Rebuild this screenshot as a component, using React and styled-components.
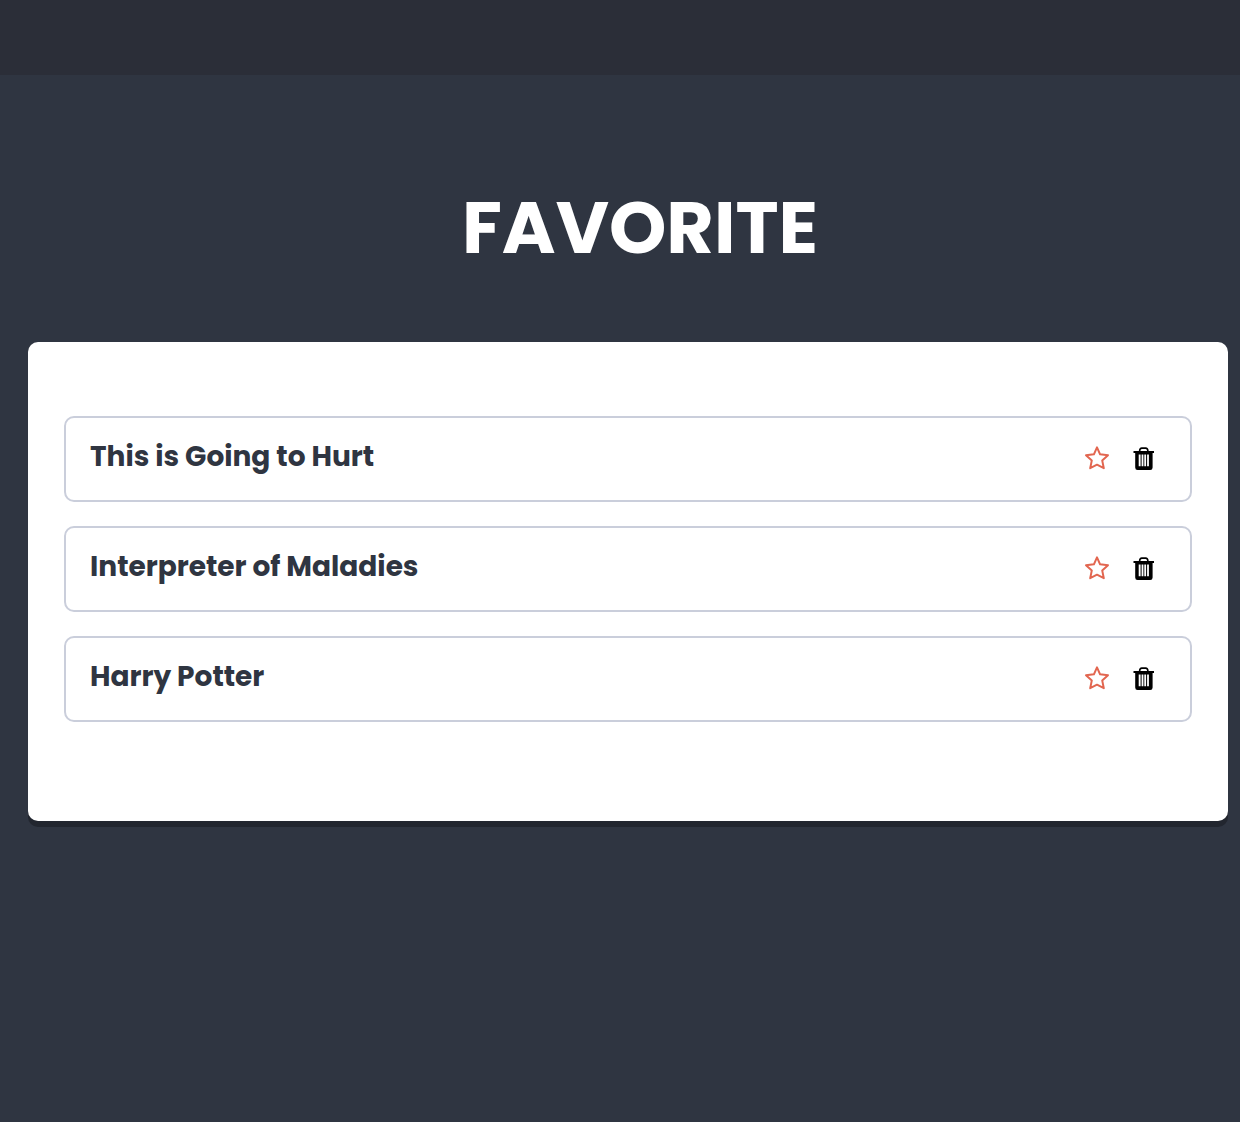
import React, { useState } from "react";
import styled, { createGlobalStyle } from "styled-components";

const GlobalStyle = createGlobalStyle`
  *, *::before, *::after { box-sizing: border-box; }
  body {
    margin: 0;
    background: #2f3541;
    color: #2f3541;
    font-family: Poppins, Inter, sans-serif;
  }
`;

const TopBar = styled.header`
  height: 75px;
  background: #2b2e38;
`;

const Main = styled.main`
  padding: 99px 12px 48px 28px;
`;

const Title = styled.h1`
  margin: 0 0 60px;
  padding-left: 24px;
  color: #fff;
  font-size: 73px;
  font-weight: 700;
  line-height: 108px;
  text-align: center;
  text-transform: uppercase;
`;

const Card = styled.ul`
  display: flex;
  flex-direction: column;
  gap: 24px;
  margin: 0;
  padding: 74px 36px 99px;
  list-style: none;
  background: #fff;
  border-radius: 10px;
  box-shadow: 0 6px 0 #22262f;
`;

const Row = styled.li`
  display: flex;
  align-items: center;
  justify-content: space-between;
  height: 86px;
  padding: 0 34px 0 24px;
  border: 2px solid #cacedb;
  border-radius: 10px;
`;

const BookTitle = styled.h2`
  margin: 0;
  padding-bottom: 4px;
  font-size: 28px;
  font-weight: 700;
  line-height: 40px;
`;

const Actions = styled.div`
  display: flex;
  gap: 22px;
`;

const IconButton = styled.button`
  display: flex;
  padding: 0;
  border: 0;
  background: none;
  color: ${(p) => p.$color};
  cursor: pointer;
`;

function StarIcon() {
  return (
    <svg width="26" height="26" viewBox="0 0 26 26" fill="none" aria-hidden="true">
      <path
        d="M13 1.4 16.1 8.3 24 9.2 18.2 14.4 19.8 22.2 13 18.7 6.2 22.2 7.8 14.4 2 9.2 9.9 8.3Z"
        stroke="currentColor"
        strokeWidth="2"
        strokeLinejoin="round"
      />
    </svg>
  );
}

function TrashIcon() {
  return (
    <svg width="24" height="26" viewBox="0 0 24 26" fill="none" aria-hidden="true">
      <path d="M7.6 5Q7.8 2.1 9.8 2.1H13.7Q15.7 2.1 15.9 5" stroke="currentColor" strokeWidth="1.6" />
      <path
        fill="currentColor"
        fillRule="evenodd"
        d="M1.5 5H22V7H20.6V21.5Q20.6 24 18.2 24H5.6Q3.2 24 3.2 21.5V7H1.5ZM6.7 8.6V20.2H8.6V8.6ZM9.6 8.6V20.2H11.4V8.6ZM12.3 8.6V20.2H14.1V8.6ZM15.1 8.6V20.2H16.9V8.6Z"
      />
    </svg>
  );
}

const initialBooks = ["This is Going to Hurt", "Interpreter of Maladies", "Harry Potter"];

export default function App() {
  const [books, setBooks] = useState(initialBooks);
  const remove = (name) => setBooks((list) => list.filter((book) => book !== name));

  return (
    <>
      <GlobalStyle />
      <TopBar />
      <Main>
        <Title>Favorite</Title>
        <Card>
          {books.map((book) => (
            <Row key={book}>
              <BookTitle>{book}</BookTitle>
              <Actions>
                <IconButton type="button" $color="#e26650" aria-label={`Favorite ${book}`}>
                  <StarIcon />
                </IconButton>
                <IconButton type="button" $color="#000" aria-label={`Delete ${book}`} onClick={() => remove(book)}>
                  <TrashIcon />
                </IconButton>
              </Actions>
            </Row>
          ))}
        </Card>
      </Main>
    </>
  );
}
